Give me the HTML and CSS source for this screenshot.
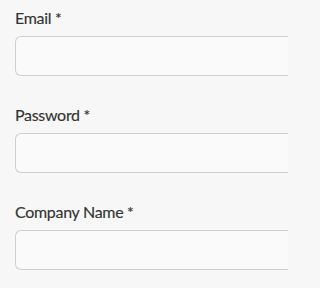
FILE: index.html
```html
<!DOCTYPE html>
<html>
<head>
<meta charset="utf-8">
<link rel="stylesheet" href="styles.css">
</head>
<body>
<form class="form">
  <div class="field">
    <label class="label">Email *</label>
    <input class="input" type="text">
  </div>
  <div class="field">
    <label class="label">Password *</label>
    <input class="input" type="password">
  </div>
  <div class="field">
    <label class="label">Company Name *</label>
    <input class="input" type="text">
  </div>
</form>
</body>
</html>
```
FILE: styles.css
```css
html, body {
  margin: 0;
  padding: 0;
  background: #f7f7f7;
  overflow: hidden;
}
body {
  font-family: Lato, "Open Sans", sans-serif;
  color: #333;
}
.form {
  display: flex;
  flex-direction: column;
  gap: 27px;
  width: 273px;
  padding: 6px 0 0 15px;
}
.field {
  display: flex;
  flex-direction: column;
  gap: 6px;
}
.label {
  font-size: 16px;
  line-height: 24px;
  font-weight: 400;
  letter-spacing: -0.3px;
  -webkit-text-stroke: 0.15px #333;
}
.input {
  box-sizing: border-box;
  width: 100%;
  height: 40px;
  border: 1px solid #cfcfcf;
  border-right: none;
  border-radius: 6px 0 0 6px;
  background: #fafafa;
  margin: 0;
  padding: 0 10px;
  outline: none;
}
```
